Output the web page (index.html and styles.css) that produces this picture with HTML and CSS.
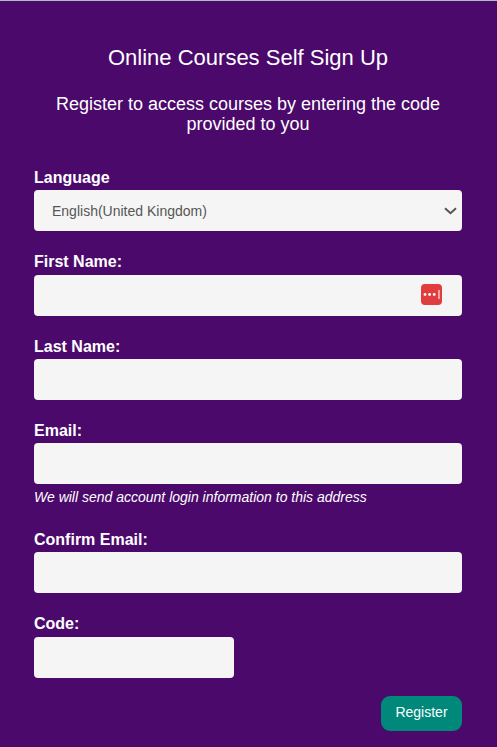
FILE: index.html
```html
<!DOCTYPE html>
<html lang="en-GB">
<head>
    <meta charset="UTF-8">
    <meta name="viewport" content="width=device-width, initial-scale=1.0">
    <title>Online Courses Self Sign Up</title>
    <link rel="stylesheet" href="styles.css">
</head>
<body>
    <div class="signup">
        <h2 class="title">Online Courses Self Sign Up</h2>
        <p class="intro">Register to access courses by entering the code provided to you</p>
        <form class="form">
            <div class="field">
                <label class="label" for="language">Language</label>
                <div class="control">
                    <select class="input select" id="language">
                        <option>English(United Kingdom)</option>
                    </select>
                    <svg class="chevron" viewBox="0 0 13 8" width="13" height="8">
                        <path d="M1 1.2l5.5 5 5.5-5" fill="none" stroke="#555" stroke-width="2"/>
                    </svg>
                </div>
            </div>
            <div class="field">
                <label class="label" for="first">First Name:</label>
                <div class="control">
                    <input class="input" id="first" type="text">
                    <svg class="keyicon" viewBox="0 0 21 21" width="21" height="21">
                        <rect width="21" height="21" rx="4" fill="#e03e3e"/>
                        <circle cx="4" cy="10.5" r="1.4" fill="#fff"/>
                        <circle cx="8.6" cy="10.5" r="1.4" fill="#fff"/>
                        <circle cx="13.2" cy="10.5" r="1.4" fill="#fff"/>
                        <rect x="17.5" y="6" width="1" height="9" fill="#fff"/>
                    </svg>
                </div>
            </div>
            <div class="field">
                <label class="label" for="last">Last Name:</label>
                <input class="input" id="last" type="text">
            </div>
            <div class="field field-hint">
                <label class="label" for="email">Email:</label>
                <input class="input" id="email" type="text">
                <p class="hint">We will send account login information to this address</p>
            </div>
            <div class="field">
                <label class="label" for="confirm">Confirm Email:</label>
                <input class="input" id="confirm" type="text">
            </div>
            <div class="field">
                <label class="label" for="code">Code:</label>
                <input class="input input-code" id="code" type="text">
            </div>
            <div class="actions">
                <button class="button" type="button">Register</button>
            </div>
        </form>
    </div>
</body>
</html>
```

FILE: styles.css
```css
html, body { margin: 0; padding: 0; }
body { font-family: "Liberation Sans", Arial, sans-serif; background-color: #4a096b; color: #fff; }
.signup { height: 746px; overflow: hidden; box-sizing: border-box; border-top: 1px solid #b0bcc0; padding: 0 35px 0 34px; }
.title { margin: 43px 0 0; font-size: 22px; line-height: 28px; font-weight: normal; text-align: center; }
.intro { margin: 22px 0 0; font-size: 18px; line-height: 20px; text-align: center; }
.form { margin-top: 32.3px; }
.field { margin-bottom: 19.33px; }
.field-hint { margin-bottom: 22px; }
.label { display: block; height: 22px; margin: -0.4px 0 2.4px; font-size: 16px; line-height: 24px; font-weight: bold; }
.control { position: relative; }
.input { display: block; box-sizing: border-box; width: 100%; height: 41px; padding: 0 18px; border: 0; border-radius: 4px; background-color: #f5f5f5; color: #555; font-family: "Liberation Sans", Arial, sans-serif; font-size: 14px; }
.select { appearance: none; -webkit-appearance: none; }
.input-code { width: 200px; }
.chevron { position: absolute; top: 17px; right: 5px; }
.keyicon { position: absolute; top: 9px; right: 20px; }
.hint { margin: 4px 0 0; font-size: 14px; line-height: 18px; font-style: italic; }
.actions { display: flex; justify-content: flex-end; margin-top: -1.33px; }
.button { width: 81px; height: 35px; padding: 0 0 2px; border: 0; border-radius: 9px; background-color: #00897b; color: #fff; font-family: "Liberation Sans", Arial, sans-serif; font-size: 14px; cursor: pointer; }
```
